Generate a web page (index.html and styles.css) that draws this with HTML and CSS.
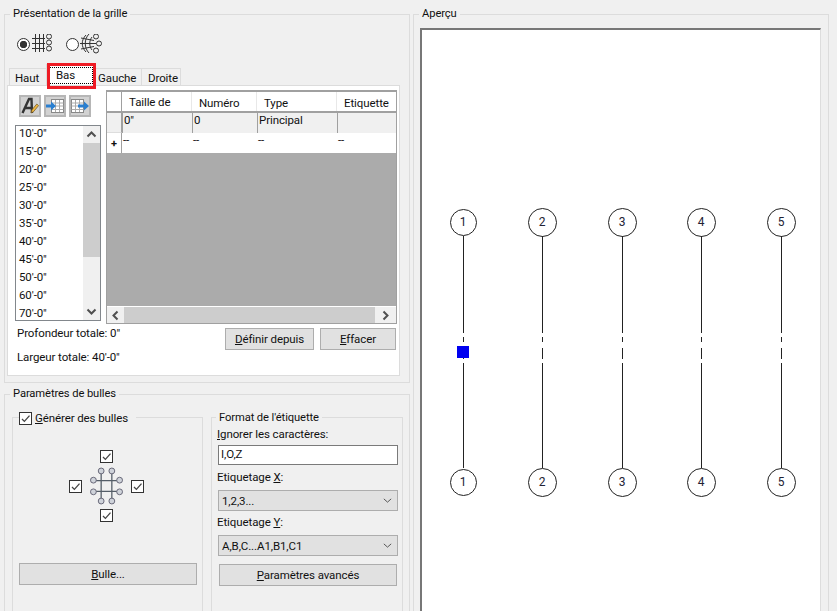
FILE: index.html
```html
<!DOCTYPE html>
<html lang="fr">
<head>
<meta charset="utf-8">
<title>Présentation de la grille</title>
<link rel="stylesheet" href="styles.css">
</head>
<body>
<svg class="defs" width="0" height="0" aria-hidden="true">
  <symbol id="check" viewBox="0 0 11 11"><path d="M2 6l2.400 2.400L9.500 2.600" fill="none" stroke="#444" stroke-width="1.300"/></symbol>
  <symbol id="chev" viewBox="0 0 11 7"><path d="M1.500 5.500L5.500 1.500l4 4" fill="none" stroke="#505050" stroke-width="2"/></symbol>
  <symbol id="drop" viewBox="0 0 11 6"><path d="M1 1l4.500 4L10 1" fill="none" stroke="#555" stroke-width="1.200"/></symbol>
</svg>
<div class="left">
  <section class="group grid-group">
    <h2 class="group-title">Présentation de la grille</h2>
    <div class="radios">
      <span class="radio on"></span>
      <svg class="grid-ico" width="22" height="20" viewBox="0 0 22 20"><g fill="none" stroke="#333" stroke-width="1"><path d="M0 4.500H13M0 9.500H13M0 14.500H13M3.500 0V18M7.500 0V18M11.500 0V18"/><circle cx="17" cy="2.500" r="2.500"/><circle cx="17" cy="8.500" r="2.500"/><circle cx="17" cy="14.500" r="2.500"/></g></svg>
      <span class="radio radio-two"></span>
      <svg class="polar-ico" width="24" height="20" viewBox="0 0 24 20"><g fill="none" stroke="#333" stroke-width="1"><path d="M9 0C4 5 4 14 9 19M6 1C1 6 1 13 6 18M12 3C9 7 9 12 12 16M0 9.500H16M1 4L14 6.500M1 15L14 12.500"/><circle cx="16" cy="2.500" r="2.500"/><circle cx="19" cy="9.500" r="2.500"/><circle cx="16" cy="16.500" r="2.500"/></g></svg>
    </div>
    <div class="tabs">
      <span class="tab">Haut</span>
      <span class="tab tab-active"><span class="focus">Bas</span></span>
      <span class="tab">Gauche</span>
      <span class="tab">Droite</span>
      <span class="red-box"></span>
    </div>
    <div class="panel">
      <div class="panel-top">
        <div class="side">
          <div class="tools">
            <span class="tool"><svg width="18" height="18" viewBox="0 0 18 18"><path d="M1.500 16L8 2h2.500l.5 14M4.500 11h6.500" fill="none" stroke="#333" stroke-width="2.400"/><path d="M10 16l.8-3 5-6 1.800 1.600-5 6z" fill="#f0b840" stroke="#6a5020" stroke-width=".7"/></svg></span>
            <span class="tool"><svg width="18" height="14" viewBox="0 0 18 14"><rect x="5.500" y=".5" width="12" height="13" fill="#fff" stroke="#888"/><path d="M5.500 4H17.500M5.500 7H17.500M5.500 10.500H17.500M9.500 1V13M13.500 1V13" stroke="#aaa" fill="none"/><path d="M0 5.500H5V2.500l5 4.500-5 4.500V8.500H0z" fill="#2a7fd0"/></svg></span>
            <span class="tool"><svg width="18" height="14" viewBox="0 0 18 14"><rect x=".5" y=".5" width="12" height="13" fill="#fff" stroke="#888"/><path d="M.5 4H12.500M.5 7H12.500M.5 10.500H12.500M4.500 1V13M8.500 1V13" stroke="#aaa" fill="none"/><path d="M7 5.500H13V2.500l5 4.500-5 4.500V8.500H7z" fill="#2a7fd0"/></svg></span>
          </div>
          <div class="list">
            <ul class="list-items">
              <li>10'-0"</li><li>15'-0"</li><li>20'-0"</li><li>25'-0"</li><li>30'-0"</li><li>35'-0"</li><li>40'-0"</li><li>45'-0"</li><li>50'-0"</li><li>60'-0"</li><li>70'-0"</li>
            </ul>
            <div class="vscroll">
              <svg class="sb-arrow" width="11" height="7"><use href="#chev"/></svg>
              <div class="vthumb"></div>
              <svg class="sb-arrow flip" width="11" height="7"><use href="#chev"/></svg>
            </div>
          </div>
        </div>
        <div class="main">
          <div class="table">
            <div class="row head">
              <span class="rh"></span><span class="c c1 up">Taille de</span><span class="c c2">Numéro</span><span class="c c3">Type</span><span class="c c4">Etiquette</span>
            </div>
            <div class="row current">
              <span class="rh"></span><span class="c c1">0"</span><span class="c c2">0</span><span class="c c3">Principal</span><span class="c c4"></span>
            </div>
            <div class="row blank">
              <span class="rh plus">+</span><span class="c c1">--</span><span class="c c2">--</span><span class="c c3">--</span><span class="c c4">--</span>
            </div>
            <div class="table-fill"></div>
            <div class="hscroll">
              <svg class="sb-arrow left-a" width="11" height="7"><use href="#chev"/></svg>
              <div class="hthumb"></div>
              <svg class="sb-arrow right-a" width="11" height="7"><use href="#chev"/></svg>
            </div>
          </div>
        </div>
      </div>
      <div class="panel-bottom">
        <div class="totals">
          <p>Profondeur totale: 0"</p>
          <p>Largeur totale: 40'-0"</p>
        </div>
        <div class="actions">
          <button class="btn btn-def"><u>D</u>éfinir depuis</button>
          <button class="btn btn-eff"><u>E</u>ffacer</button>
        </div>
      </div>
    </div>
  </section>
  <section class="group bubble-group">
    <h2 class="group-title">Paramètres de bulles</h2>
    <div class="bubble-cols">
      <div class="subgroup gen">
        <div class="gen-title"><span class="cb"><svg width="11" height="11"><use href="#check"/></svg></span><span><u>G</u>énérer des bulles</span></div>
        <div class="diagram">
          <span class="cb d-top"><svg width="11" height="11"><use href="#check"/></svg></span>
          <span class="cb d-left"><svg width="11" height="11"><use href="#check"/></svg></span>
          <svg class="d-ico" width="33" height="38" viewBox="0 0 34 38"><path d="M11.500 5V33M22.500 5V33M4 13.500H30M4 24.500H30" fill="none" stroke="#555e68" stroke-width="1.300"/><g fill="#cfd3da" stroke="#667" stroke-width="1"><circle cx="11.500" cy="3.500" r="3"/><circle cx="22.500" cy="3.500" r="3"/><circle cx="11.500" cy="34.500" r="3"/><circle cx="22.500" cy="34.500" r="3"/><circle cx="3.500" cy="13" r="3"/><circle cx="3.500" cy="25" r="3"/><circle cx="30.500" cy="13" r="3"/><circle cx="30.500" cy="25" r="3"/></g></svg>
          <span class="cb d-right"><svg width="11" height="11"><use href="#check"/></svg></span>
          <span class="cb d-bottom"><svg width="11" height="11"><use href="#check"/></svg></span>
        </div>
        <button class="btn btn-bulle"><u>B</u>ulle...</button>
      </div>
      <div class="subgroup fmt">
        <h3 class="group-title sub-title">Format de l'étiquette</h3>
        <label class="lbl first"><u>I</u>gnorer les caractères:</label>
        <div class="input">I,O,Z</div>
        <label class="lbl lx">Etiquetage <u>X</u>:</label>
        <div class="select"><span>1,2,3...</span><svg width="9" height="5"><use href="#drop"/></svg></div>
        <label class="lbl ly">Etiquetage <u>Y</u>:</label>
        <div class="select"><span>A,B,C...A1,B1,C1</span><svg width="9" height="5"><use href="#drop"/></svg></div>
        <button class="btn btn-adv"><u>P</u>aramètres avancés</button>
      </div>
    </div>
  </section>
</div>
<section class="group preview-group">
  <h2 class="group-title">Aperçu</h2>
  <div class="canvas">
    <svg class="plan" width="398" height="581" viewBox="422 30 398 581">
      <g class="axes" fill="none" stroke="#222" stroke-width="1">
        <path d="M463.500 236V333M463.500 337V342M463.500 348V359M463.500 363V468"/>
        <path d="M542.500 236V333M542.500 337V342M542.500 348V359M542.500 363V468"/>
        <path d="M622.500 236V333M622.500 337V342M622.500 348V359M622.500 363V468"/>
        <path d="M701.500 236V333M701.500 337V342M701.500 348V359M701.500 363V468"/>
        <path d="M781.500 236V333M781.500 337V342M781.500 348V359M781.500 363V468"/>
        <circle cx="463.500" cy="222.500" r="13"/><circle cx="542.500" cy="222.500" r="14"/><circle cx="622.500" cy="222.500" r="14"/><circle cx="701.500" cy="222.500" r="14"/><circle cx="781.500" cy="222.500" r="14"/>
        <circle cx="463.500" cy="482.500" r="13"/><circle cx="542.500" cy="482.500" r="14"/><circle cx="622.500" cy="482.500" r="14"/><circle cx="701.500" cy="482.500" r="14"/><circle cx="781.500" cy="482.500" r="14"/>
      </g>
      <g class="nums" text-anchor="middle">
        <text x="463" y="226">1</text><text x="542" y="226">2</text><text x="622" y="226">3</text><text x="701" y="226">4</text><text x="781" y="226">5</text>
        <text x="463" y="486">1</text><text x="542" y="486">2</text><text x="622" y="486">3</text><text x="701" y="486">4</text><text x="781" y="486">5</text>
      </g>
      <rect x="457" y="346" width="12" height="12" fill="#0000f0"/>
    </svg>
  </div>
</section>
</body>
</html>
```
FILE: styles.css
```css
* { box-sizing: border-box; }
html, body { margin: 0; height: 100%; overflow: hidden; }
body {
  width: 837px;
  height: 611px;
  display: flex;
  align-items: flex-start;
  background: #f0f0f0;
  color: #111;
  font: 11.5px/16px Roboto, "Open Sans", sans-serif;
  letter-spacing: -0.1px;
}
.defs { position: absolute; }
u { text-decoration: underline; text-underline-offset: 1px; }
p, ul, h2, h3 { margin: 0; padding: 0; font: inherit; list-style: none; }

.left { width: 406px; margin-left: 4px; margin-top: 14px; flex: none; }
.group { position: relative; border: 1px solid #dcdcdc; }
.group-title {
  position: absolute;
  top: -9px;
  left: 5px;
  padding: 0 3px;
  background: #f0f0f0;
  font-size: 11.2px;
  white-space: nowrap;
}
.grid-group { height: 369px; padding: 21px 2px 0 2px; }
.bubble-group { height: 240px; margin-top: 11px; padding: 22px 5px 0 7px; }

/* radios */
.radios { display: flex; align-items: center; height: 16px; padding-left: 10px; }
.radio {
  width: 13px; height: 13px; border: 1px solid #333; border-radius: 50%;
  background: #fff; display: block; flex: none;
}
.radio.on { background: radial-gradient(circle, #333 0 3.4px, #fff 4px); }
.grid-ico { margin-left: 2px; flex: none; }
.radio-two { margin-left: 12px; }
.polar-ico { margin-left: 1px; flex: none; }

/* tabs */
.tabs { position: relative; display: flex; height: 17px; margin-top: 16px; padding-left: 2px; }
.tab {
  height: 17px; padding: 0 5px; line-height: 18px;
  border: 1px solid #dcdcdc; border-bottom: 0; margin-right: -1px;
  background: #f0f0f0;
}
.tab:nth-child(1) { width: 38px; }
.tab:nth-child(3) { width: 47px; padding: 0 0 0 2px; }
.tab:nth-child(4) { width: 40px; padding-left: 6px; }
.tab-active {
  width: 50px; height: 21px; margin-top: -4px; padding: 2px 2px 0; background: #fff; position: relative;
}
.focus { display: block; height: 17px; padding-left: 6px; line-height: 14px; border: 1px dotted #000; }
.red-box {
  position: absolute; left: 40px; top: -5px; width: 49px; height: 26px;
  border: 3px solid #ee1c25; pointer-events: none;
}

/* panel */
.panel { background: #fff; border: 1px solid #dcdcdc; height: 291px; width: 393px; }
.panel-top { display: flex; height: 238px; }
.side { width: 86px; margin-left: 7px; flex: none; }
.tools { display: flex; gap: 3px; margin: 9px 0 0 4px; height: 22px; }
.tool {
  width: 22px; height: 22px; display: flex; align-items: center; justify-content: center;
  background: #d2d2d2; border: 2px solid #b6b6b6;
}
.list {
  display: flex; width: 86px; height: 196px; margin-top: 8px;
  border: 1px solid #82878c; background: #fff;
}
.list-items { flex: 1; padding: 0 0 0 3px; }
.list-items li { height: 18px; line-height: 14px; }
.vscroll {
  width: 17px; background: #f0f0f0; display: flex; flex-direction: column; align-items: center;
}
.sb-arrow { display: block; flex: none; }
.vscroll .sb-arrow { margin: 5px 0; }
.vscroll .sb-arrow.flip { transform: rotate(180deg); margin-top: auto; }
.vthumb { width: 17px; height: 114px; background: #cdcdcd; }
.main { margin-left: 5px; margin-top: 4px; width: 291px; flex: none; }
.table {
  width: 291px; height: 234px; border: 1px solid #a0a0a0; border-top-width: 2px; background: #ababab;
  display: flex; flex-direction: column;
}
.row { display: flex; height: 20px; flex: none; }
.rh { width: 15px; flex: none; border-right: 1px solid #a0a0a0; background: #fff; }
.c { display: block; padding-left: 1px; line-height: 15px; white-space: nowrap; flex: none; }
.c1 { width: 70px; } .c2 { width: 65px; } .c3 { width: 80px; } .c4 { flex: 1; }
.head { height: 21px; border-bottom: 2px solid #a0a0a0; background: #fff; }
.head .c { padding: 3px 0 0 7px; line-height: 16px; border-right: 1px solid #e8e8e8; }
.head .c.up { padding-top: 2px; }
.head .c4 { border-right: 0; }
.current .rh { background: #f0f0f0; border-bottom: 1px solid #ddd; }
.current { background: #f0f0f0; }
.current .c { border-left: 1px solid #a0a0a0; padding-left: 1px; }
.blank { background: #fff; }
.plus { text-align: center; line-height: 21px; font-size: 11px; font-weight: 700; }
.table-fill { flex: 1; background: #ababab; }
.hscroll {
  height: 17px; flex: none; background: #f0f0f0; border-top: 1px solid #fff; display: flex; align-items: center;
}
.hscroll .left-a { transform: rotate(-90deg); margin: 0 3px; }
.hscroll .right-a { transform: rotate(90deg); margin: 0 5px; }
.hthumb { flex: 1; height: 16px; background: #cdcdcd; }

.panel-bottom { display: flex; }
.totals { margin-left: 9px; width: 207px; flex: none; padding-top: 1px; }
.totals p { height: 24px; line-height: 16px; }
.actions { display: flex; gap: 6px; margin-top: 4px; margin-left: 1px; }
.btn {
  display: block; font: inherit; letter-spacing: inherit; color: inherit; padding: 0;
  height: 22px; background: #e1e1e1; border: 1px solid #adadad; border-radius: 0;
}
.btn-def { width: 89px; }
.btn-eff { width: 76px; }

/* bubble settings */
.bubble-cols { display: flex; }
.subgroup { border: 1px solid #dcdcdc; position: relative; height: 240px; }
.gen { width: 191px; padding: 0 5px; }
.gen-title {
  position: absolute; top: -6px; left: 6px; display: flex; gap: 3px; background: #f0f0f0; padding-right: 8px; height: 14px; line-height: 12px;
}
.cb {
  width: 13px; height: 13px; border: 1px solid #333; background: #fff; display: block; flex: none;
}
.cb svg { display: block; }
.diagram {
  display: grid; grid-template-columns: 13px 33px 13px; grid-template-rows: 13px 46px 13px;
  column-gap: 8px; justify-items: center; align-items: center; justify-content: center;
  margin: 32px 0 0 -2px;
}
.d-top { grid-column: 2; grid-row: 1; }
.d-left { grid-column: 1; grid-row: 2; }
.d-ico { grid-column: 2; grid-row: 2; }
.d-right { grid-column: 3; grid-row: 2; }
.d-bottom { grid-column: 2; grid-row: 3; }
.btn-bulle { width: 178px; margin: 41px 0 0 1px; }
.fmt { width: 192px; margin-left: 8px; padding: 0 5px 0 6px; }
.sub-title { left: 4px; top: -8px; }
.lbl { display: block; line-height: 16px; white-space: nowrap; }
.first { margin-top: 8px; margin-left: -1px; }
.input {
  width: 180px; height: 20px; margin-top: 3px; padding-left: 2px; line-height: 17px;
  background: #fff; border: 1px solid #7a7a7a;
}
.lx { margin-top: 4px; margin-left: -1px; }
.ly { margin-top: 3px; margin-left: -1px; }
.select {
  width: 180px; height: 21px; margin-top: 5px; padding: 0 5px 0 3px;
  background: #e1e1e1; border: 1px solid #adadad;
  display: flex; justify-content: space-between; align-items: center;
}
.btn-adv { width: 178px; margin: 8px 0 0 1px; }

/* preview */
.preview-group {
  width: 416px; height: 640px; margin-left: 3px; margin-top: 14px; flex: none; padding: 13px 0 0 6px;
}
.canvas {
  width: 401px; height: 620px; background: #fff;
  border-top: 2px solid #777; border-left: 2px solid #777; border-right: 1px solid #ddd;
}
.plan { display: block; }
.nums text { font: 12px Roboto, sans-serif; fill: #223; }
```
